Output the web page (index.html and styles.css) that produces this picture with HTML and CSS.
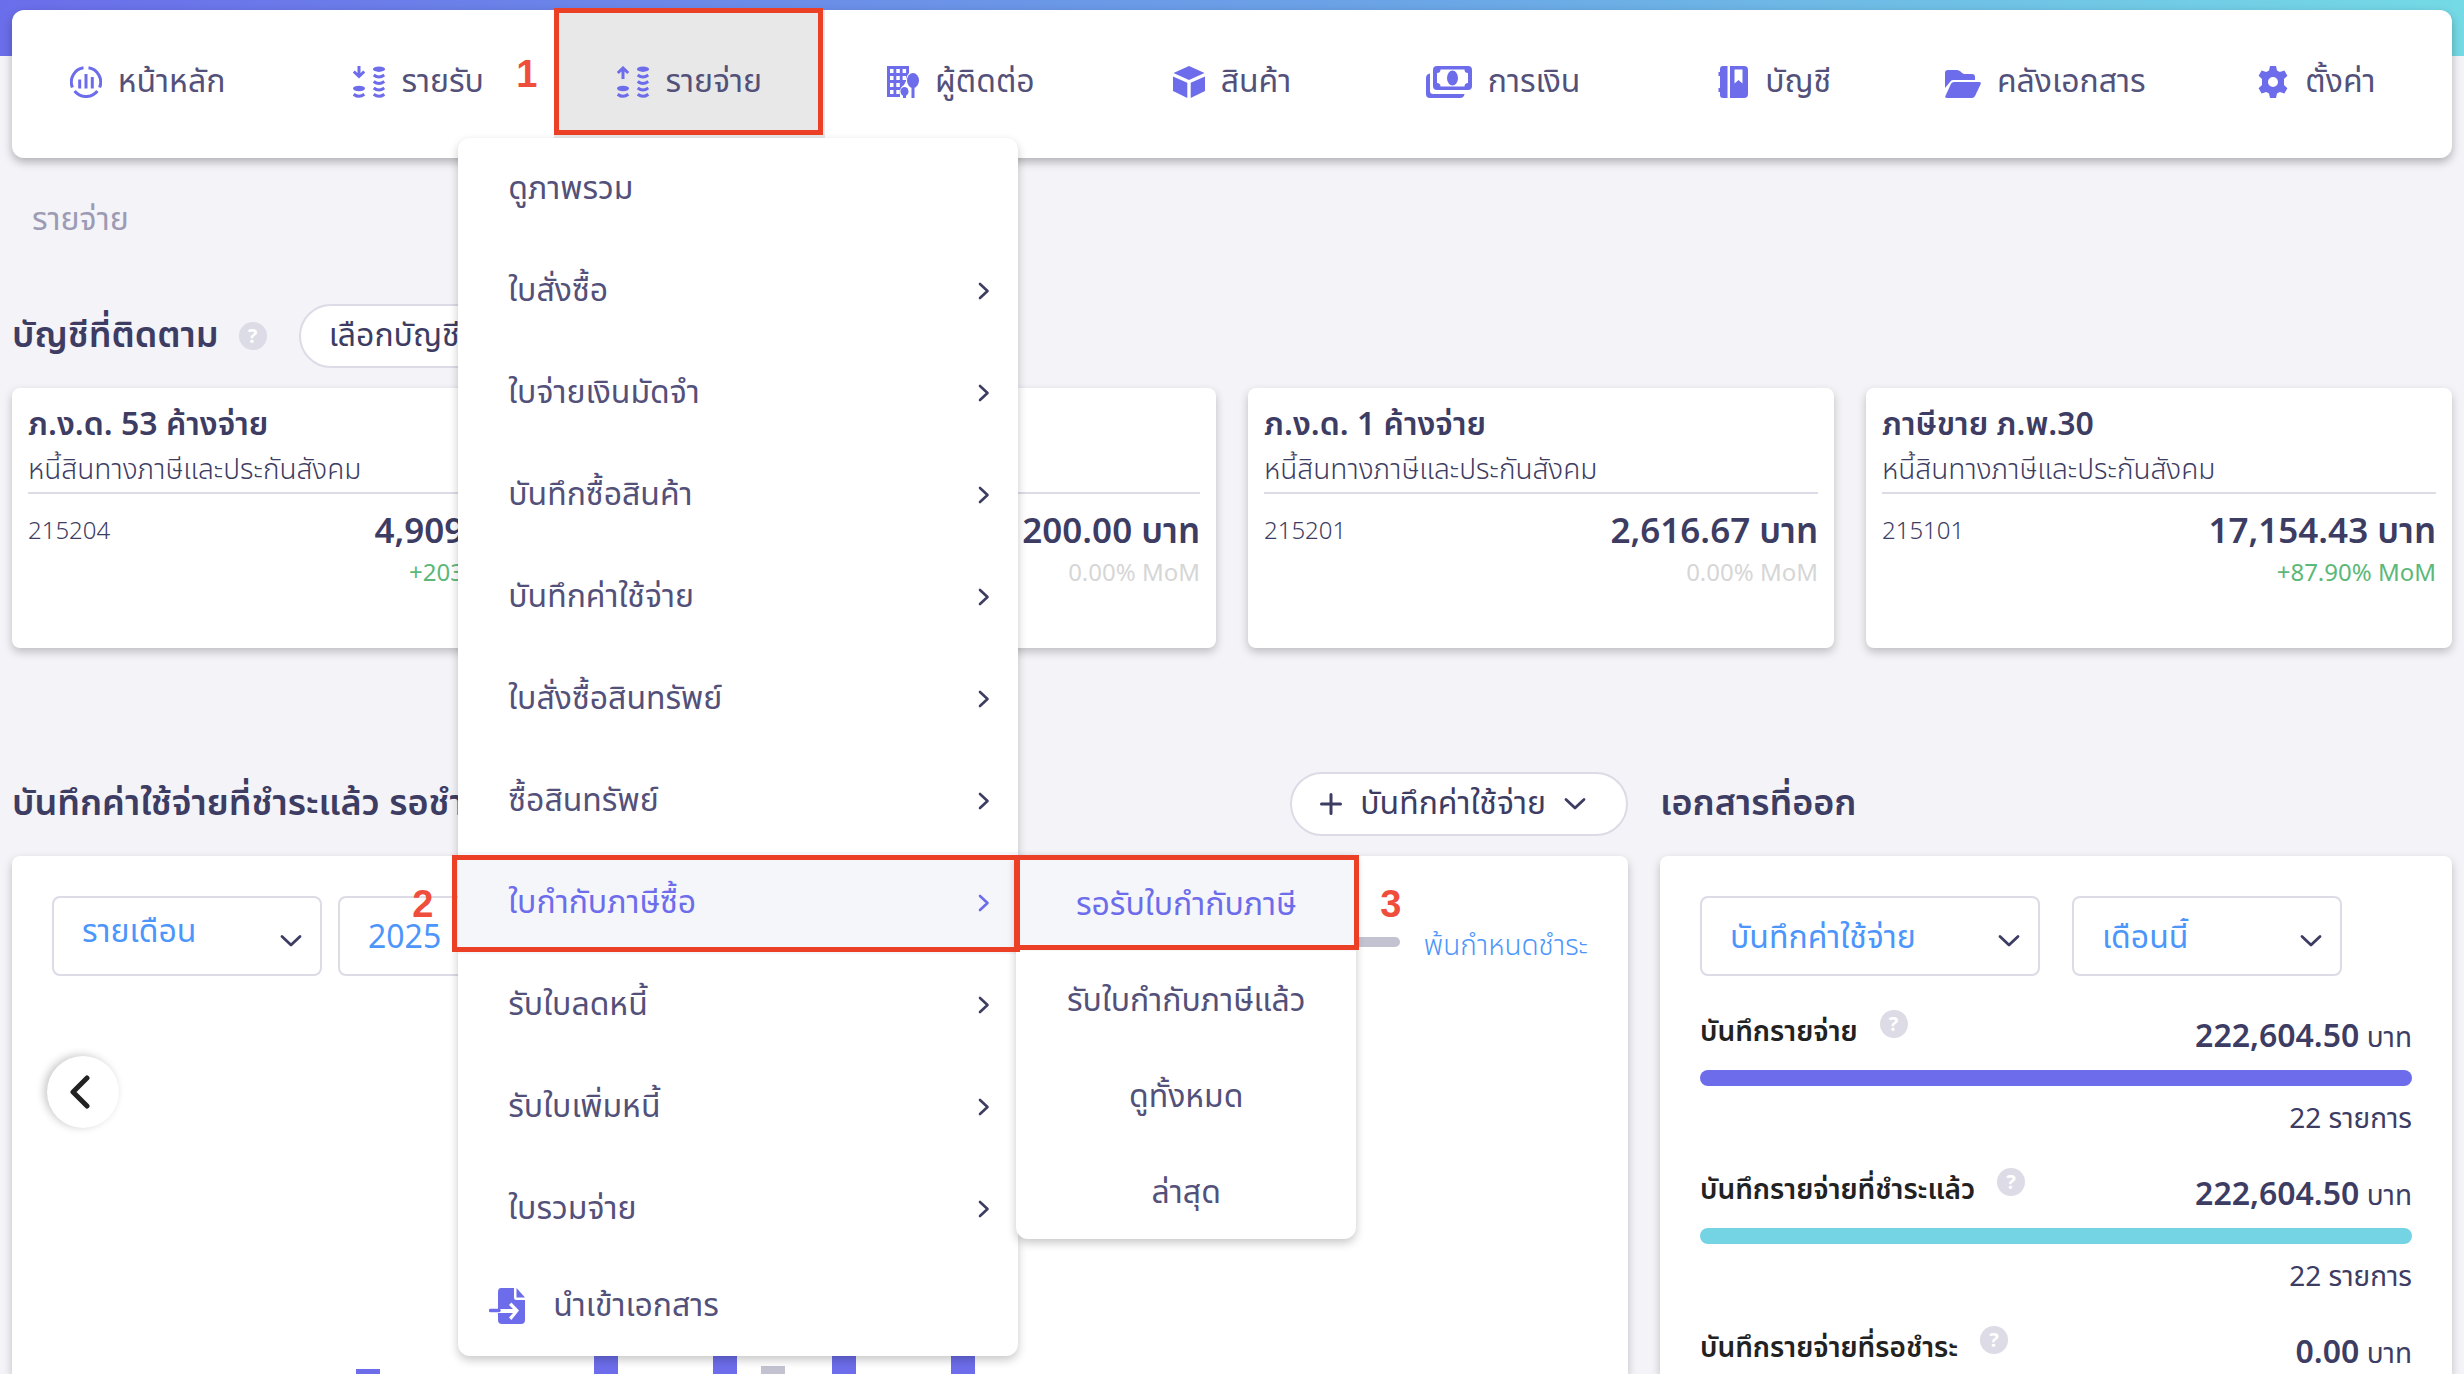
FILE: index.html
```html
<!DOCTYPE html>
<html lang="th">
<head>
<meta charset="utf-8">
<meta name="viewport" content="width=device-width, initial-scale=1">
<title>รายจ่าย</title>
<link rel="stylesheet" href="styles.css">
</head>
<body>
<svg class="sprite" aria-hidden="true">
  <symbol id="chev-right" viewBox="0 0 12 18"><path d="M2 2l7.500 7-7.500 7" fill="none" stroke="currentColor" stroke-width="2.600" stroke-linecap="round" stroke-linejoin="round"/></symbol>
  <symbol id="chev-down" viewBox="0 0 22 14"><path d="M2 2.500l9 8.500 9-8.500" fill="none" stroke="currentColor" stroke-width="2.800" stroke-linecap="round" stroke-linejoin="round"/></symbol>
  <symbol id="coins" viewBox="0 0 32 32">
    <ellipse cx="6" cy="22.500" rx="6" ry="2.700"/><ellipse cx="26" cy="3.200" rx="6" ry="2.700"/>
    <path d="M.7 28.300q5.300 4 10.600 0M20.700 9q5.300 4 10.600 0M20.700 15.500q5.300 4 10.600 0M20.700 22q5.300 4 10.600 0M20.700 28.300q5.300 4 10.600 0" fill="none" stroke="currentColor" stroke-width="3"/>
  </symbol>
</svg>

<header class="topbar">
  <nav class="nav" aria-label="เมนูหลัก">
    <ul class="nav-list">
      <li class="nav-item"><a class="nav-link" href="#">
        <svg class="icon" viewBox="0 0 32 32"><g fill="none" stroke="currentColor" stroke-width="3"><path d="M13.500 1.700A14.500 14.500 0 0 0 2.400 21.500M18.500 1.700A14.500 14.500 0 0 1 29.600 21.500M4.600 25A14.500 14.500 0 0 0 27.400 25"/><path d="M9.700 13.500v9M16 8v14.500M22.300 11v11.500"/></g></svg>หน้าหลัก</a></li>
      <li class="nav-item"><a class="nav-link" href="#">
        <svg class="icon" viewBox="0 0 32 32"><use href="#coins"/><path d="M6 0v10M.8 5.500L6 10.500l5.200-5" fill="none" stroke="currentColor" stroke-width="3"/></svg>รายรับ</a></li>
      <li class="nav-item is-open">
        <a class="nav-link" href="#">
        <svg class="icon" viewBox="0 0 32 32"><use href="#coins"/><path d="M6 13V2M.8 7L6 2l5.200 5" fill="none" stroke="currentColor" stroke-width="3"/></svg>รายจ่าย</a>
        <span class="frame frame-nav"></span><b class="step step-nav">1</b>
        <ul class="menu">
          <li class="menu-item"><a class="menu-link" href="#">ดูภาพรวม</a></li>
          <li class="menu-item"><a class="menu-link" href="#">ใบสั่งซื้อ<svg class="chev-right"><use href="#chev-right"/></svg></a></li>
          <li class="menu-item"><a class="menu-link" href="#">ใบจ่ายเงินมัดจำ<svg class="chev-right"><use href="#chev-right"/></svg></a></li>
          <li class="menu-item"><a class="menu-link" href="#">บันทึกซื้อสินค้า<svg class="chev-right"><use href="#chev-right"/></svg></a></li>
          <li class="menu-item"><a class="menu-link" href="#">บันทึกค่าใช้จ่าย<svg class="chev-right"><use href="#chev-right"/></svg></a></li>
          <li class="menu-item"><a class="menu-link" href="#">ใบสั่งซื้อสินทรัพย์<svg class="chev-right"><use href="#chev-right"/></svg></a></li>
          <li class="menu-item"><a class="menu-link" href="#">ซื้อสินทรัพย์<svg class="chev-right"><use href="#chev-right"/></svg></a></li>
          <li class="menu-item is-active"><a class="menu-link" href="#">ใบกำกับภาษีซื้อ<svg class="chev-right"><use href="#chev-right"/></svg></a>
            <ul class="submenu">
              <li><a class="submenu-link is-active" href="#">รอรับใบกำกับภาษี</a></li>
              <li><a class="submenu-link" href="#">รับใบกำกับภาษีแล้ว</a></li>
              <li><a class="submenu-link" href="#">ดูทั้งหมด</a></li>
              <li><a class="submenu-link" href="#">ล่าสุด</a></li>
            </ul>
            <span class="frame frame-menu"></span><b class="step step-menu">2</b>
            <span class="frame frame-sub"></span><b class="step step-sub">3</b>
          </li>
          <li class="menu-item"><a class="menu-link" href="#">รับใบลดหนี้<svg class="chev-right"><use href="#chev-right"/></svg></a></li>
          <li class="menu-item"><a class="menu-link" href="#">รับใบเพิ่มหนี้<svg class="chev-right"><use href="#chev-right"/></svg></a></li>
          <li class="menu-item"><a class="menu-link" href="#">ใบรวมจ่าย<svg class="chev-right"><use href="#chev-right"/></svg></a></li>
          <li class="menu-item"><a class="menu-link menu-import" href="#">
            <svg class="icon-import" viewBox="0 0 36 36"><path d="M12 0h13v9.500q0 2.500 2.500 2.500H36v20q0 4-4 4H13q-4 0-4-4v-7h15l-4 4.500 2.400 2.400L30 22.500 22.400 14.600 20 17l4 4H9V4q0-4 3-4z"/><path d="M27.500 0L36 9.500h-8.500z"/><path d="M1.500 22.500H10" stroke="currentColor" stroke-width="3.500" stroke-linecap="round"/></svg>นำเข้าเอกสาร</a></li>
        </ul>
      </li>
      <li class="nav-item"><a class="nav-link" href="#">
        <svg class="icon" viewBox="0 0 32 32"><path fill-rule="evenodd" d="M0 0h22v7q-3 3-3 8-1 2-2 4-4 2-4 7v5H0zM3 3v4h3.500V3zM9.300 3v4h3.500V3zM15.600 3v4h3.500V3zM3 10v4h3.500v-4zM9.300 10v4h3.500v-4zM15.600 10v4H19v-4zM3 17v4h3.500v-4zM9.300 17v4h3.500v-4zM3 24v4h3.500v-4zM9.300 24v4h3.500v-4z"/><ellipse cx="26" cy="14.500" rx="6" ry="7.500"/><path d="M24.500 20h3v12h-3zM16 27h3v5h-3z"/><ellipse cx="17.500" cy="25.500" rx="4" ry="4.500"/></svg>ผู้ติดต่อ</a></li>
      <li class="nav-item"><a class="nav-link" href="#">
        <svg class="icon" viewBox="0 0 32 32"><path d="M16 0l15.500 7L16 14 .5 7zM0 10.500l14.300 6.200V32L0 25zM32 10.500l-14.300 6.200V32L32 25z"/></svg>สินค้า</a></li>
      <li class="nav-item"><a class="nav-link" href="#">
        <svg class="icon icon-cash" viewBox="0 0 46 32"><path fill-rule="evenodd" d="M11 0h31q4 0 4 4v16q0 4-4 4H11q-4 0-4-4V4q0-4 4-4zM14.500 3.500q0 3.500-3.500 3.500v10q3.500 0 3.500 3.500h24q0-3.500 3.500-3.500V7q-3.500 0-3.500-3.500z"/><ellipse cx="26.500" cy="12" rx="5.500" ry="7.500"/><path d="M4 7.500V25q0 3 3 3h31.500q-.5 4-4.500 4H4q-4 0-4-4V12q0-4 4-4.500z"/></svg>การเงิน</a></li>
      <li class="nav-item"><a class="nav-link" href="#">
        <svg class="icon" viewBox="0 0 32 32"><path d="M6 0h4.500v32H6q-3 0-3-3v-3H1.500v-4H3V10H1.500V6H3V3q0-3 3-3z"/><path fill-rule="evenodd" d="M13 0h14q4 0 4 4v24q0 4-4 4H13zM17.500 3.500v14l4-3.500 4 3.500v-14z"/></svg>บัญชี</a></li>
      <li class="nav-item"><a class="nav-link" href="#">
        <svg class="icon icon-folder" viewBox="0 0 36 32"><path d="M0 22V7q0-3 3-3h9q2 0 3.500 1.500T19 8h8q3 0 3 3v3H8q-2 0-3 2z"/><path d="M9 16h25q2.500 0 1.700 2L30 30q-1 2-3 2H2q-2.500 0-1.500-2.300l5.500-12Q7 16 9 16z"/></svg>คลังเอกสาร</a></li>
      <li class="nav-item"><a class="nav-link" href="#">
        <svg class="icon" viewBox="0 0 32 32"><path fill-rule="evenodd" d="M13 0h6l1 4.500 2.800 1.600 4.600-1.600 3 5.200L27 13v6l3.400 3.300-3 5.200-4.600-1.600L20 27.500 19 32h-6l-1-4.500-2.800-1.600-4.600 1.600-3-5.200L5 19v-6L1.600 9.700l3-5.200 4.600 1.600L12 4.500zM16 11a5 5 0 1 0 0 10 5 5 0 0 0 0-10z"/></svg>ตั้งค่า</a></li>
    </ul>
  </nav>
</header>

<main class="page">
  <p class="breadcrumb">รายจ่าย</p>

  <section class="follow">
    <div class="heading-row">
      <h2 class="heading">บัญชีที่ติดตาม</h2><span class="help">?</span>
      <button class="pill pill-accounts" type="button">เลือกบัญชี</button>
    </div>
    <div class="cards">
      <article class="card">
        <h3 class="card-title">ภ.ง.ด. 53 ค้างจ่าย</h3><p class="card-sub">หนี้สินทางภาษีและประกันสังคม</p>
        <div class="card-body"><span class="code">215204</span><div class="figures"><strong class="amount">4,909.20 บาท</strong><span class="mom mom-up">+203.06% MoM</span></div></div>
      </article>
      <article class="card">
        <h3 class="card-title">ภ.ง.ด. 3 ค้างจ่าย</h3><p class="card-sub">หนี้สินทางภาษีและประกันสังคม</p>
        <div class="card-body"><span class="code">215203</span><div class="figures"><strong class="amount">200.00 บาท</strong><span class="mom">0.00% MoM</span></div></div>
      </article>
      <article class="card">
        <h3 class="card-title">ภ.ง.ด. 1 ค้างจ่าย</h3><p class="card-sub">หนี้สินทางภาษีและประกันสังคม</p>
        <div class="card-body"><span class="code">215201</span><div class="figures"><strong class="amount">2,616.67 บาท</strong><span class="mom">0.00% MoM</span></div></div>
      </article>
      <article class="card">
        <h3 class="card-title">ภาษีขาย ภ.พ.30</h3><p class="card-sub">หนี้สินทางภาษีและประกันสังคม</p>
        <div class="card-body"><span class="code">215101</span><div class="figures"><strong class="amount">17,154.43 บาท</strong><span class="mom mom-up">+87.90% MoM</span></div></div>
      </article>
    </div>
  </section>

  <div class="columns">
    <section class="column">
      <div class="heading-row heading-split">
        <h2 class="heading">บันทึกค่าใช้จ่ายที่ชำระแล้ว รอชำระ</h2>
        <button class="pill" type="button"><svg class="plus" viewBox="0 0 22 22"><path d="M11 1.500v19M1.500 11h19" stroke="currentColor" stroke-width="3" stroke-linecap="round"/></svg>บันทึกค่าใช้จ่าย<svg class="chev-down"><use href="#chev-down"/></svg></button>
      </div>
      <div class="panel panel-chart">
        <div class="chart-head">
          <div class="selects selects-tight">
            <span class="select-wrap"><select class="select select-month select-raised" aria-label="ช่วงเวลา"><option>รายเดือน</option></select><svg class="chev-down"><use href="#chev-down"/></svg></span>
            <span class="select-wrap"><select class="select select-month" aria-label="ปี"><option>2025</option></select><svg class="chev-down"><use href="#chev-down"/></svg></span>
          </div>
          <div class="legend"><span class="legend-bar"></span><a class="legend-link" href="#">พ้นกำหนดชำระ</a></div>
        </div>
        <button class="prev" type="button" aria-label="ก่อนหน้า"><svg class="prev-icon" viewBox="0 0 20 34"><path d="M17 3L3 17l14 14" fill="none" stroke="currentColor" stroke-width="5" stroke-linecap="round" stroke-linejoin="round"/></svg></button>
        <div class="chart">
          <div class="bars"><i class="bar" style="height:5px"></i></div>
          <div class="bars"></div>
          <div class="bars"><i class="bar" style="height:40px"></i></div>
          <div class="bars"><i class="bar" style="height:60px"></i><i class="bar bar-due" style="height:8px"></i></div>
          <div class="bars"><i class="bar" style="height:50px"></i></div>
          <div class="bars"><i class="bar" style="height:45px"></i></div>
        </div>
      </div>
    </section>

    <section class="column">
      <div class="heading-row"><h2 class="heading">เอกสารที่ออก</h2></div>
      <div class="panel panel-docs">
        <div class="selects">
          <span class="select-wrap"><select class="select select-doc" aria-label="ประเภทเอกสาร"><option>บันทึกค่าใช้จ่าย</option></select><svg class="chev-down"><use href="#chev-down"/></svg></span>
          <span class="select-wrap"><select class="select select-month" aria-label="เดือน"><option>เดือนนี้</option></select><svg class="chev-down"><use href="#chev-down"/></svg></span>
        </div>
        <div class="stat"><div class="stat-row"><span class="stat-label">บันทึกรายจ่าย<span class="help">?</span></span><span class="stat-value"><strong class="stat-sum">222,604.50</strong> บาท</span></div><div class="meter"></div><p class="stat-count">22 รายการ</p></div>
        <div class="stat"><div class="stat-row"><span class="stat-label">บันทึกรายจ่ายที่ชำระแล้ว<span class="help">?</span></span><span class="stat-value"><strong class="stat-sum">222,604.50</strong> บาท</span></div><div class="meter meter-paid"></div><p class="stat-count">22 รายการ</p></div>
        <div class="stat"><div class="stat-row"><span class="stat-label">บันทึกรายจ่ายที่รอชำระ<span class="help">?</span></span><span class="stat-value"><strong class="stat-sum">0.00</strong> บาท</span></div></div>
      </div>
    </section>
  </div>
</main>
</body>
</html>
```
FILE: styles.css
```css
:root {
  --ink: #3d3c63;
  --ink-soft: #53517a;
  --brand: #6d6deb;
  --link: #4c96fb;
  --line: #dcdbe6;
  --mark: #eb4026;
  --shadow: 0 4px 10px rgba(0, 0, 0, .22);
}
* { box-sizing: border-box; }
body {
  margin: 0;
  height: 100vh;
  overflow: hidden;
  display: flex;
  flex-direction: column;
  background: #f3f3f8;
  color: var(--ink);
  font: 400 32px/40px "Noto Sans Thai", "Noto Sans", sans-serif;
}
h2, h3, p, ul { margin: 0; padding: 0; }
ul { list-style: none; }
a { color: inherit; text-decoration: none; }
button, select { font: inherit; color: inherit; margin: 0; }
strong { font-weight: 600; }
.sprite { position: absolute; width: 0; height: 0; }

/* Top navigation */
.topbar {
  position: relative;
  z-index: 2;
  padding: 10px 12px 0;
  background: linear-gradient(90deg, #6b6eea, #6ba8e6 60%, #74dae5) 0 0 / 100% 56px no-repeat;
}
.nav { background: #fff; border-radius: 12px; padding-bottom: 20px; box-shadow: 0 4px 10px rgba(0, 0, 0, .28); }
.nav-list { display: grid; grid-template-columns: repeat(9, 1fr); }
.nav-item { position: relative; }
.nav-item.is-open { background: #e8e8e8; }
.nav-link {
  display: flex;
  justify-content: center;
  align-items: center;
  gap: 16px;
  height: 128px;
  padding-top: 16px;
  color: var(--ink-soft);
  white-space: nowrap;
}
.icon, .icon-import { flex: none; width: 32px; height: 32px; color: var(--brand); fill: currentColor; }
.icon-cash { width: 46px; }
.icon-folder { width: 36px; }
.icon-import { width: 36px; height: 36px; }

/* Expense menu */
.menu, .submenu { position: absolute; background: #fff; color: var(--ink-soft); box-shadow: var(--shadow); }
.menu { top: 128px; left: -96px; width: 560px; border-radius: 12px; }
.menu-item { position: relative; }
.menu-link {
  display: flex;
  justify-content: space-between;
  align-items: center;
  height: 102px;
  padding: 0 28px 0 50px;
}
.chev-right { width: 12px; height: 18px; color: var(--ink); }
.is-active { background: #f5f6f9; color: var(--brand); }
.is-active .chev-right { color: inherit; }
.menu-import { justify-content: flex-start; gap: 28px; height: 96px; padding: 0 0 4px 31px; }
.submenu { top: 3px; left: 558px; width: 340px; border-radius: 0 0 12px 12px; }
.submenu-link { display: flex; justify-content: center; align-items: center; height: 96px; padding-top: 4px; }

/* Step callouts */
.frame { position: absolute; border: 5px solid var(--mark); pointer-events: none; }
.frame-nav { inset: -2px 2px 3px 0; }
.frame-menu { inset: 3px -2px 2px -6px; }
.frame-sub { top: 3px; left: 556px; width: 345px; height: 95px; }
.step { position: absolute; font: bold 38px/40px "Liberation Sans", Arial, sans-serif; color: #f04e3c; }
.step-nav { top: 44px; left: -38px; }
.step-menu { top: 32px; left: -46px; }
.step-sub { top: 32px; left: 922px; }

/* Page */
.page { flex: 1; min-height: 0; display: flex; flex-direction: column; padding: 42px 12px 0; }
.breadcrumb { padding-left: 20px; color: #9c9bb3; }
.heading-row { display: flex; align-items: center; height: 64px; white-space: nowrap; }
.heading { font-size: 36px; font-weight: 600; }
.follow { margin-top: 64px; }
.help {
  display: inline-grid;
  place-items: center;
  width: 28px;
  height: 28px;
  border-radius: 50%;
  background: var(--line);
  color: #fff;
  font: 700 20px/28px "Noto Sans", sans-serif;
}
.heading-row .help { margin: 0 32px 0 20px; }
.pill {
  display: flex;
  align-items: center;
  gap: 18px;
  height: 64px;
  padding: 0 40px 0 28px;
  border: 2px solid var(--line);
  border-radius: 32px;
  background: #fff;
}
.plus { width: 22px; height: 22px; }
.chev-down { width: 22px; height: 14px; color: var(--ink); }

.cards { display: grid; grid-template-columns: repeat(4, 1fr); gap: 32px; margin-top: 20px; }
.card { min-height: 260px; padding: 16px; border-radius: 8px; background: #fff; box-shadow: var(--shadow); }
.card-title { font-size: 32px; font-weight: 600; line-height: 42px; }
.card-sub { padding-top: 4px; border-bottom: 2px solid var(--line); font-size: 28px; font-weight: 300; line-height: 42px; }
.card-body { display: flex; justify-content: space-between; padding-top: 18px; }
.code { font-size: 24px; font-weight: 300; line-height: 40px; }
.figures { display: flex; flex-direction: column; align-items: flex-end; }
.amount { font-size: 35px; line-height: 42px; }
.mom { font-size: 24px; line-height: 40px; color: #d6d6d6; }
.mom-up { color: #5cb878; }

/* Lower columns */
.columns { flex: 1; min-height: 0; display: grid; grid-template-columns: 1616fr 792fr; gap: 32px; margin-top: 124px; }
.column { display: flex; flex-direction: column; min-width: 0; min-height: 0; }
.heading-split { justify-content: space-between; }
.panel { flex: 1; min-height: 0; margin-top: 20px; padding: 40px 40px 0; border-radius: 8px 8px 0 0; background: #fff; box-shadow: var(--shadow); }
.chart-head { display: flex; justify-content: space-between; align-items: center; }
.selects { display: flex; gap: 32px; }
.selects-tight { gap: 16px; }
.select-wrap { position: relative; display: flex; }
.select-wrap .chev-down { position: absolute; right: 20px; top: 38px; pointer-events: none; }
.select {
  appearance: none;
  height: 80px;
  padding: 4px 48px 0 28px;
  border: 2px solid var(--line);
  border-radius: 8px;
  background: #fff;
  color: var(--link);
}
.select-doc { width: 340px; }
.select-month { width: 270px; }
.select-raised { padding: 0 48px 8px 28px; }
.legend { display: flex; align-items: center; gap: 24px; padding-top: 12px; font-size: 28px; font-weight: 300; color: var(--link); }
.legend-bar { width: 100px; height: 10px; border-radius: 5px; background: #c3c2d0; }
.legend-link { padding-top: 10px; }

.panel-chart { display: flex; flex-direction: column; }
.prev {
  display: grid;
  place-items: center;
  width: 72px;
  height: 72px;
  margin: 80px 0 0 -5px;
  padding: 0 6px 0 0;
  border: 0;
  border-radius: 50%;
  background: #fff;
  color: #222;
  box-shadow: -3px -1px 8px rgba(0, 0, 0, .22);
}
.prev-icon { width: 20px; height: 34px; }
.chart { flex: 1; display: flex; padding-left: 292px; }
.bars { flex: 0 0 119px; display: flex; align-items: flex-end; gap: 24px; padding-left: 12px; }
.bar { width: 24px; background: var(--brand); }
.bar-due { background: #c3c2d0; }

.stat { height: 158px; padding-top: 36px; }
.selects + .stat { margin-top: 2px; }
.stat-row { display: flex; justify-content: space-between; height: 56px; }
.stat-label { display: flex; gap: 22px; font-size: 28px; line-height: 38px; font-weight: 600; color: #222; }
.stat-label .help { margin-top: -4px; }
.stat-value { font-size: 28px; line-height: 46px; }
.stat-sum { font-size: 32px; }
.meter { height: 16px; border-radius: 8px; background: var(--brand); }
.meter-paid { background: #74d4e4; }
.stat-count { margin-top: 14px; font-size: 28px; text-align: right; }
```
